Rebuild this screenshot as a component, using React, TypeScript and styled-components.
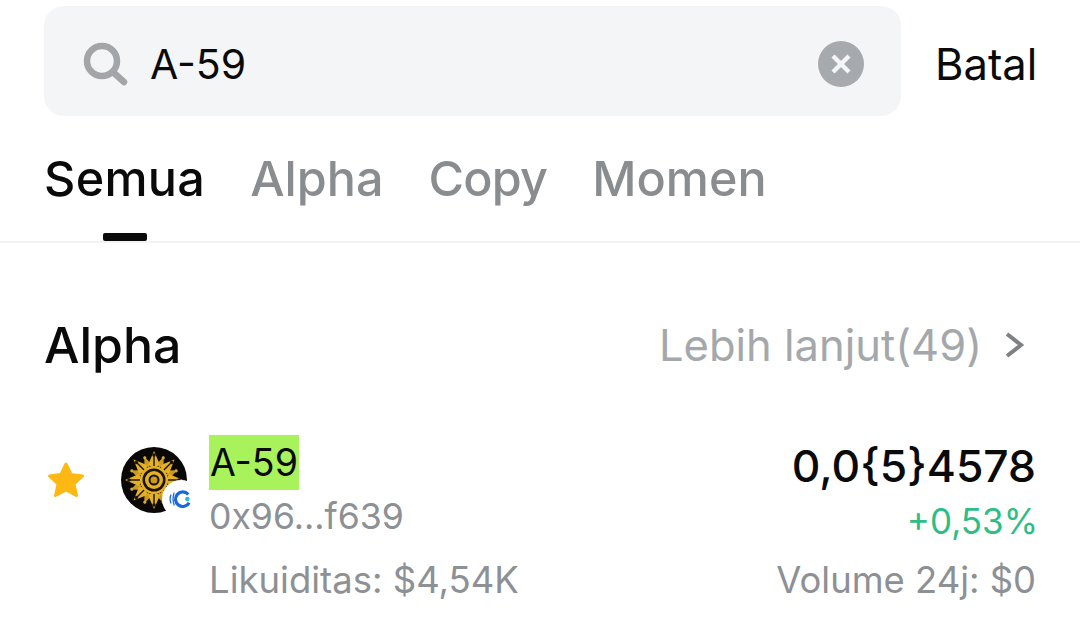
import React from "react";
import styled, { createGlobalStyle } from "styled-components";

const Global = createGlobalStyle`
  html, body { margin: 0; padding: 0; background: #fff; }
  body { font-family: Inter, "Liberation Sans", sans-serif; color: #0a0a0a; }
  * { box-sizing: border-box; }
`;

const Page = styled.div`
  width: 1080px;
  height: 636px;
  overflow: hidden;
  background: #fff;
  padding-top: 6px;
`;

const SearchRow = styled.div`
  display: flex;
  align-items: center;
  height: 110px;
  padding: 0 44px 0 44px;
  gap: 34px;
`;

const SearchBox = styled.div`
  width: 857px;
  flex: none;
  height: 110px;
  background: #f4f5f7;
  border-radius: 20px;
  display: flex;
  align-items: center;
  padding: 5px 37px 0 39px;
`;

const SearchText = styled.span`
  font-size: 41px;
  line-height: 48px;
  margin-left: 21px;
  flex: 1;
  margin-top: 1px;
`;

const Cancel = styled.span`
  font-size: 43.5px;
  line-height: 48px;
  margin-top: 5px;
`;

const Tabs = styled.div`
  display: flex;
  gap: 45px;
  height: 127px;
  padding: 32px 0 0 44px;
  border-bottom: 2px solid #f2f3f4;
`;

const Tab = styled.div<{ $active?: boolean; $spacing?: number }>`
  position: relative;
  font-size: 48.5px;
  line-height: 62px;
  font-weight: 500;
  letter-spacing: ${(p) => p.$spacing ?? 0}px;
  color: ${(p) => (p.$active ? "#0a0a0a" : "#8a8d90")};
  &::after {
    content: "";
    display: ${(p) => (p.$active ? "block" : "none")};
    position: absolute;
    left: 59px;
    top: 85px;
    width: 44px;
    height: 8px;
    border-radius: 2px;
    background: #0a0a0a;
  }
`;

const SectionHead = styled.div`
  display: flex;
  justify-content: space-between;
  align-items: center;
  height: 62px;
  margin-top: 71px;
  padding: 0 54px 0 44px;
`;

const SectionTitle = styled.div`
  font-size: 50px;
  line-height: 62px;
  font-weight: 500;
`;

const More = styled.div`
  display: flex;
  align-items: center;
  gap: 20px;
  font-size: 43.5px;
  line-height: 48px;
  color: #a5a8ab;
`;

const Row = styled.div`
  display: flex;
  height: 170px;
  margin-top: 59px;
  padding: 0 44px 0 47px;
`;

const StarCell = styled.div`
  width: 74px;
  padding-top: 27px;
  flex: none;
`;

const Avatar = styled.div`
  position: relative;
  width: 66px;
  height: 66px;
  margin-top: 12px;
  flex: none;
`;

const Badge = styled.div`
  position: absolute;
  right: -13px;
  bottom: -5px;
  width: 38px;
  height: 38px;
  border-radius: 50%;
  background: #fff;
  display: flex;
  align-items: center;
  justify-content: center;
`;

const Info = styled.div`
  margin-left: 22px;
  flex: 1;
  display: flex;
  flex-direction: column;
  align-items: flex-start;
`;

const Highlight = styled.span`
  background: #a8f35c;
  font-size: 37.5px;
  line-height: 55px;
  height: 55px;
  padding: 0 1px;
`;

const Sub = styled.div<{ $top: number; $size: number }>`
  font-size: ${(p) => p.$size}px;
  line-height: 44px;
  color: #8d9094;
  margin-top: ${(p) => p.$top}px;
`;

const Right = styled.div`
  display: flex;
  flex-direction: column;
  align-items: flex-end;
  padding-top: 7px;
`;

const Price = styled.div`
  font-size: 44.4px;
  line-height: 48px;
  font-weight: 500;
`;

const Change = styled.div`
  font-size: 35px;
  line-height: 40px;
  color: #2ebd85;
  margin-top: 11px;
  margin-right: -2px;
`;

const Spoke = ({ a }: { a: number }) => (
  <g transform={`rotate(${a} 33 33)`}>
    <path d="M33 4 L39 18 L33 21 L27 18 Z" fill="#e3b026" />
    <path d="M33 8 L33 19" stroke="#1a1208" strokeWidth="1.400" />
    <circle cx="33" cy="8" r="1.800" fill="#1a1208" />
  </g>
);

const Dot = ({ a }: { a: number }) => (
  <g transform={`rotate(${a} 33 33)`}>
    <path d="M33 8 L36 15 L33 20 L30 15 Z" fill="#c99a22" />
    <circle cx="33" cy="9" r="1.600" fill="#d8ab30" />
  </g>
);

export default function App() {
  return (
    <Page>
      <Global />
      <SearchRow>
        <SearchBox>
          <svg width="46" height="44" viewBox="0 0 46 44">
            <circle cx="19" cy="19" r="15" fill="none" stroke="#a3a6a9" strokeWidth="6.5" />
            <path d="M31 31 L41 40" stroke="#a3a6a9" strokeWidth="6.5" strokeLinecap="round" />
          </svg>
          <SearchText>A-59</SearchText>
          <svg width="46" height="46" viewBox="0 0 46 46">
            <circle cx="23" cy="23" r="23" fill="#a6a9ad" />
            <path d="M15 15 L31 31 M31 15 L15 31" stroke="#f4f5f7" strokeWidth="4.5" />
          </svg>
        </SearchBox>
        <Cancel>Batal</Cancel>
      </SearchRow>
      <Tabs>
        <Tab $active $spacing={0.3}>Semua</Tab>
        <Tab>Alpha</Tab>
        <Tab $spacing={-0.75}>Copy</Tab>
        <Tab>Momen</Tab>
      </Tabs>
      <SectionHead>
        <SectionTitle>Alpha</SectionTitle>
        <More>
          Lebih lanjut(49)
          <svg width="24" height="28" viewBox="0 0 24 28">
            <path d="M5 3 L19 14 L5 25" fill="none" stroke="#7f8285" strokeWidth="4" />
          </svg>
        </More>
      </SectionHead>
      <Row>
        <StarCell>
          <svg width="38" height="36" viewBox="0 0 38 36">
            <path
              d="M19 2 L24 12.5 L35.5 14 L27 22 L29.5 33.5 L19 28 L8.500 33.500 L11 22 L2.500 14 L14 12.500 Z"
              fill="#fdb813"
              stroke="#fdb813"
              strokeWidth="3"
              strokeLinejoin="round"
            />
          </svg>
        </StarCell>
        <Avatar>
          <svg width="66" height="66" viewBox="0 0 66 66">
            <circle cx="33" cy="33" r="33" fill="#0a0806" />
            {[22.5, 67.5, 112.5, 157.5, 202.5, 247.5, 292.5, 337.5].map((a) => (
              <Dot key={a} a={a} />
            ))}
            {[0, 45, 90, 135, 180, 225, 270, 315].map((a) => (
              <Spoke key={a} a={a} />
            ))}
            <circle cx="33" cy="33" r="14" fill="#e3b026" />
            <circle cx="33" cy="33" r="11.500" fill="#1a1208" />
            <circle cx="33" cy="33" r="9" fill="#e3b026" />
            <circle cx="33" cy="33" r="5.500" fill="#1a1208" />
            <circle cx="33" cy="33" r="3.500" fill="#c99a22" />
          </svg>
          <Badge>
            <svg width="24" height="20" viewBox="0 0 26 22">
              <path d="M2 6 Q0 11 2 16 M5.500 4 Q3 11 5.500 18" fill="none" stroke="#1f6fd6" strokeWidth="1.500" />
              <path d="M21 6 A8 8 0 1 0 22 15" fill="none" stroke="#1668dc" strokeWidth="3.500" />
              <circle cx="20" cy="11" r="2.500" fill="#2bb8e0" />
            </svg>
          </Badge>
        </Avatar>
        <Info>
          <Highlight>A-59</Highlight>
          <Sub $size={35.6} $top={5}>0x96...f639</Sub>
          <Sub $size={36.5} $top={19}>Likuiditas: $4,54K</Sub>
        </Info>
        <Right>
          <Price>0,0{"{5}"}4578</Price>
          <Change>+0,53%</Change>
          <Sub $size={36.4} $top={17}>Volume 24j: $0</Sub>
        </Right>
      </Row>
    </Page>
  );
}
